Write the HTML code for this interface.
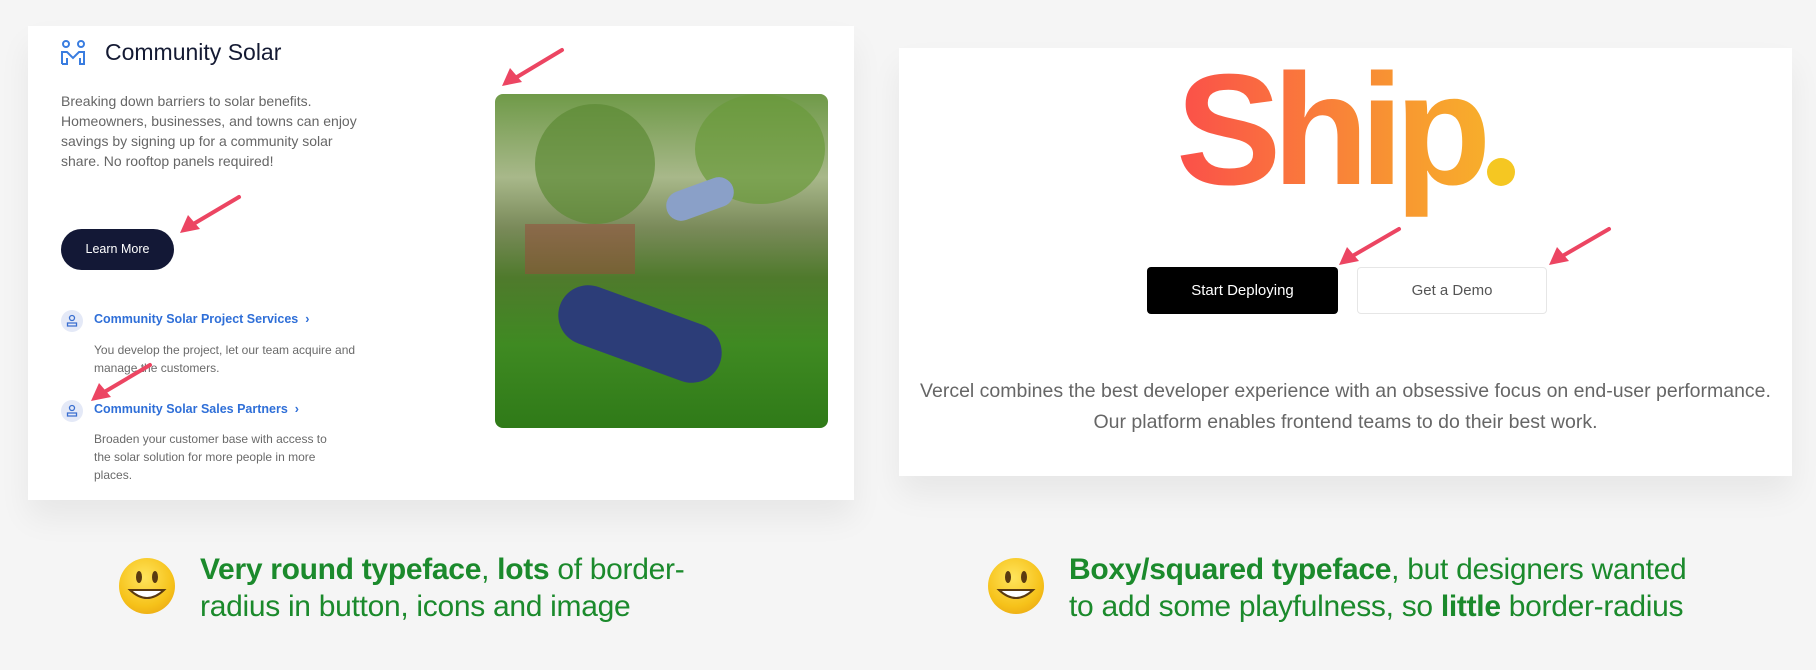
<!DOCTYPE html>
<html><head><meta charset="utf-8"><style>
*{margin:0;padding:0;box-sizing:border-box}
body{width:1816px;height:670px;background:#f5f5f5;position:relative;overflow:hidden;font-family:"Liberation Sans",sans-serif}
.abs{position:absolute}
.card{position:absolute;background:#fff;box-shadow:0 18px 30px rgba(0,0,0,0.06)}
.p{color:#666;font-size:14px;line-height:20px}
.lk{color:#2f6fd8;font-size:12.5px;font-weight:bold;white-space:nowrap}
.ic{width:22px;height:22px;border-radius:50%;background:#e4e9f7}
.d{color:#6a6a6a;font-size:12px;line-height:18px}
.cap{font-size:30px;line-height:37px;color:#1b8a2c;letter-spacing:-0.3px;white-space:nowrap}
.emo{width:56px;height:56px;border-radius:50%;background:radial-gradient(circle at 45% 35%,#ffe45c,#f6c21a 60%,#e59a10)}
</style></head><body>
<div class="card" style="left:28px;top:26px;width:826px;height:474px"></div>
<svg class="abs" style="left:60px;top:40px" width="28" height="26" viewBox="0 0 28 26" fill="none" stroke="#3a7de0" stroke-width="2"><circle cx="6" cy="4" r="3"/><circle cx="21" cy="4" r="3"/><path d="M2 24V12h5l6 6 6-6h5v12M2 24h5v-6M25 24h-5v-6"/></svg>
<div class="abs" style="left:105px;top:39px;font-size:23px;color:#141a33">Community Solar</div>
<div class="abs p" style="left:61px;top:91px;width:310px">Breaking down barriers to solar benefits. Homeowners, businesses, and towns can enjoy savings by signing up for a community solar share. No rooftop panels required!</div>
<div class="abs" style="left:61px;top:229px;width:113px;height:41px;border-radius:21px;background:#131836;color:#fff;font-size:12.5px;text-align:center;line-height:41px">Learn More</div>
<div class="abs ic" style="left:61px;top:310px"></div>
<svg class="abs" style="left:66px;top:314px" width="12" height="13" viewBox="0 0 12 13" fill="none" stroke="#3a6fd0" stroke-width="1.3"><circle cx="6" cy="4" r="2.5"/><path d="M1.5 12v-3h9v3z"/></svg>
<div class="abs lk" style="left:94px;top:312px">Community Solar Project Services &nbsp;›</div>
<div class="abs d" style="left:94px;top:341px;width:270px">You develop the project, let our team acquire and manage the customers.</div>
<div class="abs ic" style="left:61px;top:400px"></div>
<svg class="abs" style="left:66px;top:404px" width="12" height="13" viewBox="0 0 12 13" fill="none" stroke="#3a6fd0" stroke-width="1.3"><circle cx="6" cy="4" r="2.5"/><path d="M1.5 12v-3h9v3z"/></svg>
<div class="abs lk" style="left:94px;top:402px">Community Solar Sales Partners &nbsp;›</div>
<div class="abs d" style="left:94px;top:430px;width:245px">Broaden your customer base with access to the solar solution for more people in more places.</div>
<div class="abs" style="left:495px;top:94px;width:333px;height:334px;border-radius:8px;overflow:hidden;background:linear-gradient(180deg,#6f9a48 0%,#a8b88a 25%,#7a8a5a 40%,#4f7a2c 55%,#3f8a22 75%,#2f7a18 100%)">
<div class="abs" style="left:40px;top:10px;width:120px;height:120px;border-radius:50%;background:#5d8a34;opacity:.7"></div>
<div class="abs" style="left:200px;top:0;width:130px;height:110px;border-radius:50%;background:#6a9a3a;opacity:.7"></div>
<div class="abs" style="left:30px;top:130px;width:110px;height:50px;background:#9a4a3a;opacity:.5"></div>
<div class="abs" style="left:60px;top:210px;width:170px;height:60px;border-radius:30px;background:#2c3d78;transform:rotate(20deg)"></div>
<div class="abs" style="left:170px;top:90px;width:70px;height:30px;border-radius:15px;background:#8aa0c8;transform:rotate(-20deg)"></div>
</div>
<div class="card" style="left:899px;top:48px;width:893px;height:428px"></div>
<div class="abs" style="left:1176px;top:35px;padding-right:30px;font-size:158px;font-weight:bold;letter-spacing:-9px;line-height:190px;background:linear-gradient(90deg,#fb4f4a,#f89a30 70%,#f7b52a);-webkit-background-clip:text;background-clip:text;color:transparent">Ship</div>
<div class="abs" style="left:1487px;top:158px;width:28px;height:28px;border-radius:50%;background:#f5c722"></div>
<div class="abs" style="left:1147px;top:267px;width:191px;height:47px;background:#000;border-radius:4px;color:#fff;font-size:15px;text-align:center;line-height:47px">Start Deploying</div>
<div class="abs" style="left:1357px;top:267px;width:190px;height:47px;border:1px solid #e6e6e6;border-radius:4px;color:#555;font-size:15px;text-align:center;line-height:45px">Get a Demo</div>
<div class="abs" style="left:899px;top:376px;width:893px;text-align:center;font-size:19.5px;line-height:31px;color:#666;white-space:nowrap">Vercel combines the best developer experience with an obsessive focus on end-user performance.<br>Our platform enables frontend teams to do their best work.</div>
<svg class="abs" style="left:0;top:0" width="1816" height="670" fill="#ec4562" stroke="#ec4562" stroke-width="4" stroke-linecap="round">
<g><line x1="562" y1="50" x2="512" y2="80"/><path d="M502 86l8-18 12 14z" stroke="none"/></g>
<g><line x1="239" y1="197" x2="190" y2="226"/><path d="M180 233l8-18 12 14z" stroke="none"/></g>
<g><line x1="150" y1="365" x2="101" y2="394"/><path d="M91 401l8-18 12 14z" stroke="none"/></g>
<g><line x1="1399" y1="229" x2="1349" y2="258"/><path d="M1339 265l8-18 12 14z" stroke="none"/></g>
<g><line x1="1609" y1="229" x2="1559" y2="258"/><path d="M1549 265l8-18 12 14z" stroke="none"/></g>
</svg>
<div class="abs emo" style="left:119px;top:558px"></div>
<div class="abs emo" style="left:988px;top:558px"></div>
<svg class="abs" style="left:119px;top:558px" width="56" height="56"><ellipse cx="20" cy="19" rx="3" ry="6" fill="#5a3a10"/><ellipse cx="36" cy="19" rx="3" ry="6" fill="#5a3a10"/><path d="M11 32q17 16 34 0z" fill="#fff" stroke="#5a3a10" stroke-width="2"/></svg>
<svg class="abs" style="left:988px;top:558px" width="56" height="56"><ellipse cx="20" cy="19" rx="3" ry="6" fill="#5a3a10"/><ellipse cx="36" cy="19" rx="3" ry="6" fill="#5a3a10"/><path d="M11 32q17 16 34 0z" fill="#fff" stroke="#5a3a10" stroke-width="2"/></svg>
<div class="abs cap" style="left:200px;top:551px"><b>Very round typeface</b>, <b>lots</b> of border-<br>radius in button, icons and image</div>
<div class="abs cap" style="left:1069px;top:551px"><b>Boxy/squared typeface</b>, but designers wanted<br>to add some playfulness, so <b>little</b> border-radius</div>
</body></html>
